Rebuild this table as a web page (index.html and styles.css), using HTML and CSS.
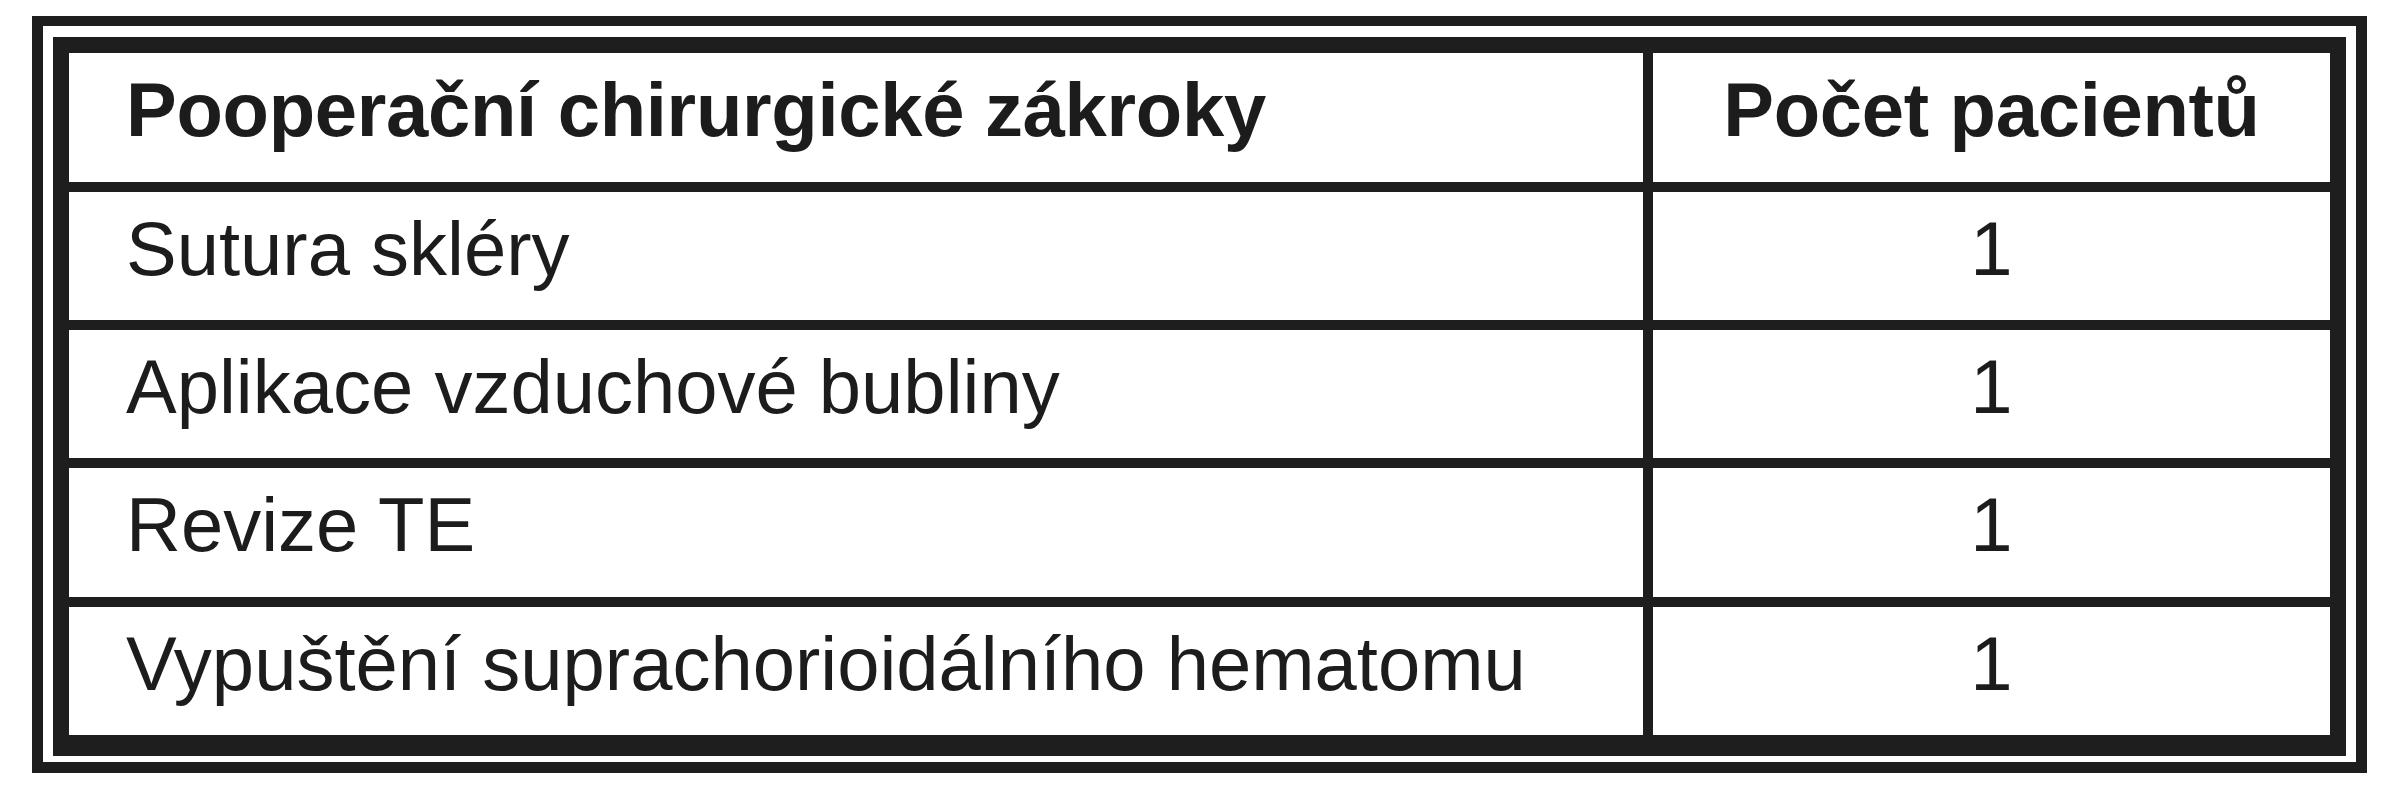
FILE: index.html
```html
<!DOCTYPE html>
<html lang="cs">
<head>
<meta charset="utf-8">
<title>Pooperační chirurgické zákroky</title>
<link rel="stylesheet" href="styles.css">
</head>
<body>
<div class="frame">
  <div class="grid">
    <div class="cell head">Pooperační chirurgické zákroky</div>
    <div class="cell head num">Počet pacientů</div>
    <div class="cell">Sutura skléry</div>
    <div class="cell num">1</div>
    <div class="cell">Aplikace vzduchové bubliny</div>
    <div class="cell num">1</div>
    <div class="cell">Revize TE</div>
    <div class="cell num">1</div>
    <div class="cell">Vypuštění suprachorioidálního hematomu</div>
    <div class="cell num">1</div>
  </div>
</div>
</body>
</html>
```
FILE: styles.css
```css
html, body {
  margin: 0;
  padding: 0;
  background: #ffffff;
}
body {
  padding: 16px 0 0 32px;
  font-family: "Liberation Sans", Arial, sans-serif;
  color: #1c1c1c;
}
.frame {
  width: 2293px;
  border-style: solid;
  border-color: #1e1e1e;
  border-width: 10px 11px 11px 11px;
  padding: 11px 10px 6px 10px;
  background: #ffffff;
}
.grid {
  display: grid;
  grid-template-columns: 1574px 677px;
  grid-template-rows: 129px 128px 128px 129px 128px;
  gap: 10px;
  background: #1e1e1e;
  border-style: solid;
  border-color: #1e1e1e;
  border-width: 16px 16px 21px 16px;
}
.cell {
  background: #ffffff;
  font-size: 76px;
  line-height: 88px;
  padding: 13px 0 0 57px;
  white-space: nowrap;
}
.head {
  font-weight: bold;
  letter-spacing: -0.3px;
}
.num {
  padding-left: 0;
  text-align: center;
}
```
